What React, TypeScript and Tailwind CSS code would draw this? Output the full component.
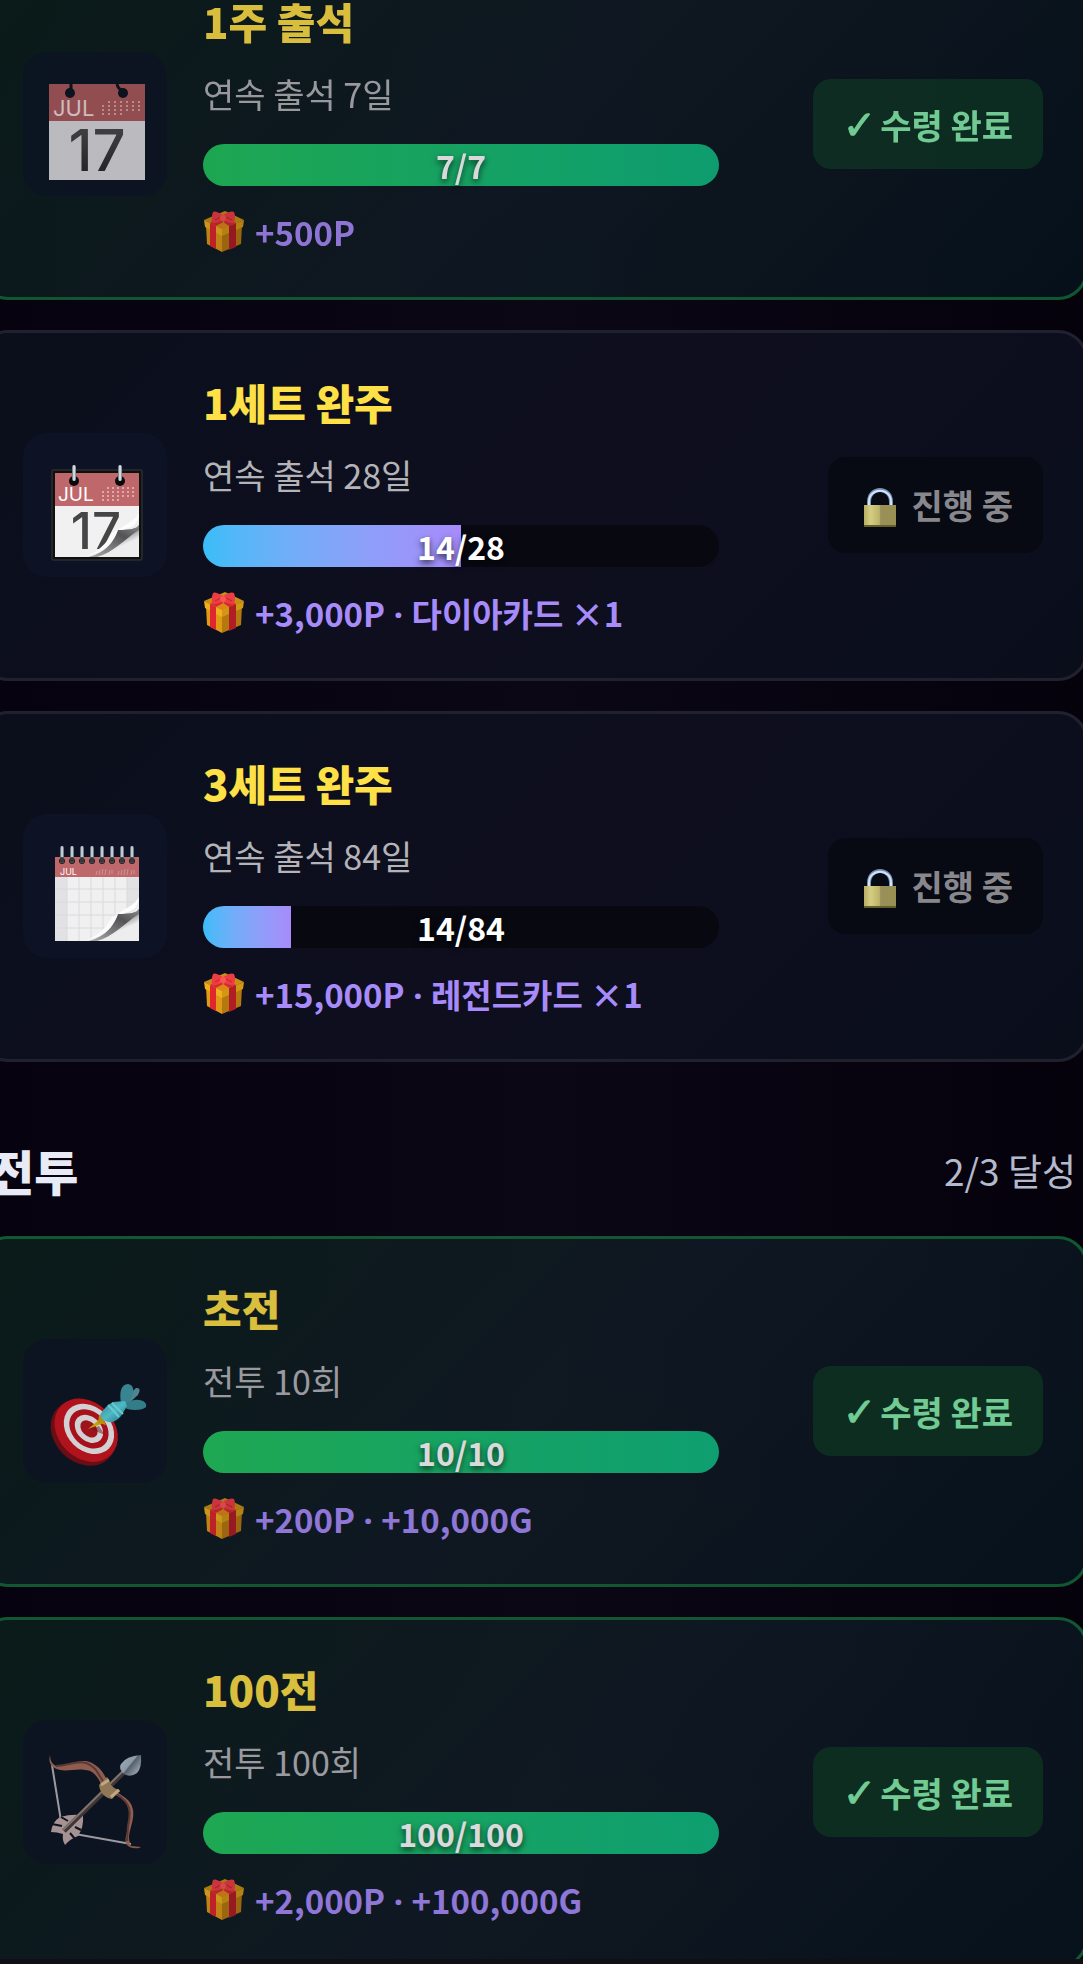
type Kind = "calendar" | "tearoff" | "spiral" | "target" | "bow";

type Achievement = {
    icon: Kind;
    title: string;
    description: string;
    value: number;
    goal: number;
    rewards: string[];
};

const attendance: Achievement[] = [
    { icon: "calendar", title: "1주 출석", description: "연속 출석 7일", value: 7, goal: 7, rewards: ["+500P"] },
    { icon: "tearoff", title: "1세트 완주", description: "연속 출석 28일", value: 14, goal: 28, rewards: ["+3,000P", "다이아카드 ×1"] },
    { icon: "spiral", title: "3세트 완주", description: "연속 출석 84일", value: 14, goal: 84, rewards: ["+15,000P", "레전드카드 ×1"] },
];

const battle: Achievement[] = [
    { icon: "target", title: "초전", description: "전투 10회", value: 10, goal: 10, rewards: ["+200P", "+10,000G"] },
    { icon: "bow", title: "100전", description: "전투 100회", value: 100, goal: 100, rewards: ["+2,000P", "+100,000G"] },
];

function MiniDays({ x, y, step }: { x: number; y: number; step: number }) {
    return (
        <g fill="#f3d5d5" opacity="0.6">
            {[0, 1, 2, 3, 4, 5, 6].map((col) =>
                [0, 1, 2, 3].map((row) =>
                    (row === 0 && col < 1) || (row === 3 && col > 3) ? null : (
                        <rect key={`${col}-${row}`} x={x + col * step} y={y + row * 4} width="2" height="2" />
                    ),
                ),
            )}
        </g>
    );
}

// Esquina de la hoja doblada
function PageCurl() {
    return (
        <g>
            <defs>
                <linearGradient id="curl-shadow" x1="1" y1="0" x2="0.1" y2="1">
                    <stop offset="0" stopColor="#8a8a8c" />
                    <stop offset="0.35" stopColor="#535355" />
                    <stop offset="1" stopColor="#a5a5a7" />
                </linearGradient>
                <linearGradient id="curl-fade" x1="0.35" y1="0.35" x2="0.6" y2="0.7">
                    <stop offset="0" stopColor="#5c5c5e" />
                    <stop offset="1" stopColor="#ededee" />
                </linearGradient>
            </defs>
            <path d="M90 50v42H36C55 88 64 78 69 65c12 0 21-4 21-15z" fill="#ededee" />
            <path d="M90 60v18L70 92H40C57 87 64 78 69 65c12 0 19-1 21-5z" fill="url(#curl-fade)" />
            <path d="M90 60v5C74 75 64 88 48 92h-8C57 87 64 78 69 65c12 0 19-1 21-5z" fill="url(#curl-shadow)" />
            <path d="M90 48c0 12-8 16-21 17 5-5 15-7 21-17z" fill="#fdfdfd" />
            <path d="M69 65C64 78 57 87 36 92c14-6 22-14 27-24z" fill="#fbfbfb" />
        </g>
    );
}

function CalendarIcon() {
    return (
        <svg viewBox="0 0 96 96" className="h-24 w-24 overflow-visible" aria-hidden="true">
            <defs>
                <linearGradient id="ink" x1="0" y1="0" x2="0" y2="1">
                    <stop offset="0" stopColor="#555" />
                    <stop offset="1" stopColor="#222" />
                </linearGradient>
            </defs>
            <rect y="0" width="96" height="38" fill="#ac5c5e" />
            <rect y="37" width="96" height="59" fill="#dcdcde" />
            <path d="M22 0v6M68 0q1 5 5 6" fill="none" stroke="#0d1722" strokeWidth="3" />
            <circle cx="21" cy="9" r="5" fill="#0d1722" />
            <circle cx="74" cy="9" r="5" fill="#0d1722" />
            <text x="4" y="32" fontSize="22" fill="#f0dede" className="font-['Inter']">JUL</text>
            <MiniDays x={53} y={17} step={6} />
            <text x="48" y="87" textAnchor="middle" fontSize="58" fontWeight="500" fill="url(#ink)" className="font-['Inter']">17</text>
        </svg>
    );
}

function TearOffIcon() {
    return (
        <svg viewBox="0 0 96 96" className="h-24 w-24 overflow-visible" aria-hidden="true">
            <defs>
                <linearGradient id="ring" x1="0" y1="0" x2="1" y2="0">
                    <stop offset="0" stopColor="#51616c" />
                    <stop offset="0.5" stopColor="#f4fbff" />
                    <stop offset="1" stopColor="#6a7883" />
                </linearGradient>
            </defs>
            <rect x="3" y="5" width="90" height="90" rx="1" fill="#10100f" stroke="#3b3b3b" />
            <rect x="6" y="8" width="84" height="34" fill="#be686b" />
            <rect x="6" y="41" width="84" height="51" fill="#f1f1f2" />
            <circle cx="25" cy="16" r="5" fill="#0a0a0a" />
            <circle cx="71" cy="16" r="5" fill="#0a0a0a" />
            <rect x="23" y="0" width="4" height="16" rx="2" fill="url(#ring)" />
            <rect x="69" y="0" width="4" height="16" rx="2" fill="url(#ring)" />
            <text x="9" y="36" fontSize="19" fill="#fff" className="font-['Inter']">JUL</text>
            <MiniDays x={53} y={22} step={5} />
            <text x="47" y="84" textAnchor="middle" fontSize="51" fontWeight="500" fill="#454547" className="font-['Inter']">17</text>
            <PageCurl />
        </svg>
    );
}

function SpiralIcon() {
    return (
        <svg viewBox="0 0 96 96" className="h-24 w-24 overflow-visible" aria-hidden="true">
            <defs>
                <linearGradient id="coil" x1="0" y1="0" x2="1" y2="0">
                    <stop offset="0" stopColor="#3c4a55" />
                    <stop offset="0.5" stopColor="#e8f3fa" />
                    <stop offset="1" stopColor="#48545e" />
                </linearGradient>
            </defs>
            <rect x="6" y="11" width="84" height="21" fill="#be686b" />
            <rect x="6" y="31" width="84" height="64" fill="#f0f0f1" />
            <path d="M6 31h12v64H6zM78 31h12v64H78z" fill="#e2e2e4" />
            <path d="M18 31v64M30 31v64M42 31v64M54 31v64M66 31v64M78 31v64M6 43h84M6 56h84M6 69h84M6 82h84" stroke="#dadadd" strokeWidth="1" />
            <text x="11" y="29" fontSize="9" fill="#fff" className="font-['Inter']">JUL</text>
            <path d="M47 29l1-4m2 4 1-5m2 5 1-6m2 6 1-6m3 6 1-5m2 4v-4M69 29l1-4m2 4 1-5m2 5 1-6m2 6 1-6m3 6 1-5m2 4v-4" stroke="#dba5a7" opacity="0.7" />
            {[13, 23, 33, 43, 53, 63, 73, 83].map((x) => (
                <g key={x}>
                    <circle cx={x} cy="15" r="3" fill="#241c1e" />
                    <rect x={x - 2} y="0" width="4" height="17" rx="2" fill="url(#coil)" />
                    <rect x={x - 2} y="11" width="4" height="6" rx="2" fill="#33383d" />
                </g>
            ))}
            <g transform="translate(0 3)">
                <PageCurl />
            </g>
        </svg>
    );
}

function TargetIcon() {
    return (
        <svg viewBox="0 0 96 96" className="h-24 w-24 overflow-visible" aria-hidden="true">
            <defs>
                <linearGradient id="barrel" x1="0" y1="0" x2="1" y2="1">
                    <stop offset="0" stopColor="#4399a6" />
                    <stop offset="0.5" stopColor="#5bdae6" />
                    <stop offset="1" stopColor="#23818d" />
                </linearGradient>
            </defs>
            <g transform="translate(1 12)">
                <g transform="rotate(45 34 48)">
                    <ellipse cx="35" cy="50" rx="36" ry="29" fill="#7c0f16" />
                    <ellipse cx="35" cy="46" rx="35" ry="28" fill="#cf1620" />
                    <ellipse cx="36" cy="43" rx="28" ry="22" fill="#f7f4f5" />
                    <ellipse cx="36" cy="43" rx="22" ry="17" fill="#c4141f" />
                    <ellipse cx="36" cy="43" rx="16" ry="12" fill="#f7f4f5" />
                    <ellipse cx="36" cy="43" rx="10" ry="7" fill="#b81720" />
                </g>
                <path d="M40 46 55 52l-6-9z" fill="#851119" opacity="0.5" />
                <path d="m38 46 12-10 4 4z" fill="#e3bd0d" />
                <path d="m49 33-1 7 8 2-4-10z" fill="#d5a90c" />
                <path d="M74 17 86 5q6-1 2 7L78 21z" fill="#5e9ba3" />
                <path d="M71 20Q68 2 78 1q7 1 5 11l-6 11z" fill="#419ca8" />
                <path d="M73 24q8-10 20-6 4 2 3 6-3 3-11 3-7 0-12-3z" fill="#3b929e" />
                <path d="M50 32q5-9 13-13l12-1 2 5-6 10q-6 7-12 6-7-1-9-7z" fill="url(#barrel)" />
                <path d="m62 20 11 11M58 22l11 12" stroke="#78edf5" strokeWidth="2" />
            </g>
        </svg>
    );
}

function BowIcon() {
    return (
        <svg viewBox="0 0 96 96" className="h-24 w-24 overflow-visible" aria-hidden="true">
            <defs>
                <linearGradient id="tip" x1="0" y1="0" x2="1" y2="0.8">
                    <stop offset="0" stopColor="#b8cbd8" />
                    <stop offset="0.5" stopColor="#a3b5c1" />
                    <stop offset="0.55" stopColor="#62717c" />
                    <stop offset="1" stopColor="#c1ced6" />
                </linearGradient>
            </defs>
            <g transform="translate(-1 2)">
                <path d="M4 11 13 67M16 78l67 12" stroke="#b4b5ba" strokeWidth="2" />
                <path d="M35 62q1 11-5 20-8 3-13 9-3-5-2-11-6-2-12-2 1-10 9-15 11-3 21-2z" fill="#c4abab" />
                <path d="m4 70 10 2M13 63l7 4M33 76l-6-3M27 85l-5-6" stroke="#0c1722" strokeWidth="2" />
                <path d="M2 1q0 8 6 11c18-1 28-12 43 2 8 8 9 17 13 20 6 7 19 9 21 22 2 12-7 24-3 33l-3 2q-3-3 0-13c2-13 5-25-4-32-6-6-16-7-22-16-3-7-8-14-16-14C26 14 15 20 5 13Q0 9 2 1z" fill="#a86c5b" />
                <path d="M8 12c17-1 28-10 40 4l10 16M67 39c17 10 16 20 13 33l-1 15" fill="none" stroke="#69433a" strokeWidth="2" />
                <path d="m81 89 2 3 10 1-2 1q-8 1-12-3z" fill="#a06b58" />
                <path d="M16 77 78 16" stroke="#493f3d" strokeWidth="5" />
                <path d="M15 76 77 15" stroke="#95877e" strokeWidth="2" />
                <path d="m51 31 8-8 2 3c2 7 6 9 11 10l-8 9c-6-1-12-5-13-14z" fill="#ab8c64" />
                <path d="m53 31 8-5M63 43l8-7" stroke="#e1c497" strokeWidth="3" />
                <path d="M93 1q1 13-4 18-7 5-13 1-6-6-3-10Q78 2 93 1z" fill="url(#tip)" />
            </g>
        </svg>
    );
}

function GiftIcon() {
    return (
        <svg viewBox="0 0 42 42" className="size-[42px]" aria-hidden="true">
            <path d="m3 14 16 8v19L4 33z" fill="#e09a16" />
            <path d="m19 22 20-8-1 19-19 8z" fill="#b5780f" />
            <path d="M1 9 22 0l19 9-22 10z" fill="#c98f14" />
            <path d="m1 9 18 9v7L2 16z" fill="#eeb01d" />
            <path d="m19 18 22-9-1 7-21 9z" fill="#d29814" />
            <path d="m7 12 6 3v23l-6-3z" fill="#df2730" />
            <path d="m26 15 7-3v24l-7 3z" fill="#b01d24" />
            <path d="m7 12 9-5 6 3-9 5zM26 15l7-3-8-4-6 2z" fill="#d32a31" />
            <path d="m13 15 7-3 6 3-7 3z" fill="#e5831b" />
            <path d="M20 4Q12-1 10 1q-2 5-1 11 6 1 11-3zM20 4q8-5 11-3 2 5 0 11-6 1-11-3z" fill="#ee3d42" />
            <path d="m12 9 6-3M29 9l-6-3" stroke="#b9272e" />
            <ellipse cx="20" cy="7" rx="3" ry="3" fill="#ff5355" />
        </svg>
    );
}

function LockIcon() {
    return (
        <svg viewBox="-2 -5 44 44" className="size-11" aria-hidden="true">
            <defs>
                <linearGradient id="brass" x1="0" y1="0" x2="1" y2="0">
                    <stop offset="0" stopColor="#b8ad62" />
                    <stop offset="0.2" stopColor="#d5ce82" />
                    <stop offset="0.48" stopColor="#bdb36b" />
                    <stop offset="0.52" stopColor="#99905a" />
                    <stop offset="1" stopColor="#989052" />
                </linearGradient>
            </defs>
            <path d="M9 19v-5C9 -2 31 -2 31 14v5" fill="none" stroke="#7390b7" strokeWidth="4" />
            <path d="M9 19v-5C9 -1 31 -1 31 14v5" fill="none" stroke="#d3e2f5" strokeWidth="2" />
            <path d="M4 17h32v22H4z" fill="url(#brass)" />
            <path d="M4 38h32" stroke="#645d2d" strokeWidth="2" />
        </svg>
    );
}

const icons = {
    calendar: CalendarIcon,
    tearoff: TearOffIcon,
    spiral: SpiralIcon,
    target: TargetIcon,
    bow: BowIcon,
};

function AchievementCard({ item }: { item: Achievement }) {
    const done = item.value >= item.goal;
    const percent = Math.round((item.value / item.goal) * 100);
    const Icon = icons[item.icon];

    return (
        <li
            className={
                done
                    ? "flex items-center gap-9 rounded-[30px] border-3 border-[#146638] bg-linear-[135deg] from-[#0b201b] via-[#111c25] to-[#08141e] px-[42px] pt-9 pb-[38px] opacity-85"
                    : "flex items-center gap-9 rounded-[30px] border-3 border-[#20212f] bg-linear-[135deg] from-[#0a0f1b] via-[#0e0e1f] to-[#0a0e1b] px-[42px] pt-9 pb-[38px]"
            }
        >
            <div className={`flex size-36 shrink-0 items-center justify-center rounded-3xl pt-4 pl-1 ${done ? "bg-[#0e1825]" : "bg-[#0d1324]"}`}>
                <Icon />
            </div>

            <div className="min-w-0 flex-1">
                <h3 className="text-[42px] leading-[65px] font-extrabold text-[#ffe046]">{item.title}</h3>
                <p className="mt-[17px] text-[34px] leading-[48px] text-[#b4b4b8]">{item.description}</p>

                {/* Barra de progreso */}
                <div
                    role="progressbar"
                    aria-label={item.title}
                    aria-valuenow={item.value}
                    aria-valuemax={item.goal}
                    className="relative mt-[26px] h-[42px]"
                >
                    <div className="h-full overflow-hidden rounded-full bg-[#080811]">
                        <div
                            className={done ? "h-full bg-linear-to-r from-[#22c55e] to-[#10b981]" : "h-full bg-linear-to-r from-[#38bdf8] to-[#a78bfa]"}
                            style={{ width: `${percent}%` }}
                        />
                    </div>
                    <span className="absolute inset-x-0 top-0 text-center text-[32px] leading-[42px] font-bold text-white [text-shadow:0_3px_6px_rgb(0_0_0/0.7)]">
                        {item.value}/{item.goal}
                    </span>
                </div>

                <p className="mt-[19px] flex items-center gap-2.5 text-[33px] leading-[54px] font-bold text-[#a78bfa]">
                    <GiftIcon />
                    <span>
                        {item.rewards.map((reward, i) => (
                            <span key={reward}>
                                {i > 0 && <span className="font-['Noto_Sans'] leading-none"> · </span>}
                                {reward}
                            </span>
                        ))}
                    </span>
                </p>
            </div>

            <div className="flex w-[288px] shrink-0 justify-end">
                {done ? (
                    <button type="button" disabled className="flex h-[90px] items-center gap-1 rounded-[18px] bg-[#103525] px-[30px] pt-0.5 text-[34px] font-bold text-[#86efac]">
                        <span className="font-['DejaVu_Sans'] text-[40px] leading-none [-webkit-text-stroke:1px]">✓</span>
                        수령 완료
                    </button>
                ) : (
                    <button type="button" disabled className="flex h-24 items-center gap-[9px] rounded-[18px] bg-[#070913] px-[30px] text-[34px] font-bold text-[#87878c]">
                        <LockIcon />
                        진행 중
                    </button>
                )}
            </div>
        </li>
    );
}

export default function App() {
    return (
        <>
            <main className="overflow-hidden bg-linear-to-r from-[#06020f] via-[#0b0715] to-[#05020c] font-['Noto_Sans_CJK_KR',sans-serif]">
                <div className="-mt-[51px] -mr-[5px] -mb-[9px] -ml-[22px]">
                    <ul className="flex flex-col gap-[30px]">
                        {attendance.map((item) => (
                            <AchievementCard key={item.title} item={item} />
                        ))}
                    </ul>

                    <header className="flex items-center justify-between px-3 pt-[72px] pb-[30px]">
                        <h2 className="text-[48px] leading-[72px] font-extrabold text-[#e8eaf5]">전투</h2>
                        <span className="text-[37px] leading-[54px] text-[#b4b9cb]">2/3 달성</span>
                    </header>

                    <ul className="flex flex-col gap-[30px]">
                        {battle.map((item) => (
                            <AchievementCard key={item.title} item={item} />
                        ))}
                    </ul>
                </div>
            </main>
            <footer className="h-[5px] bg-[#110f16]" />
        </>
    );
}
